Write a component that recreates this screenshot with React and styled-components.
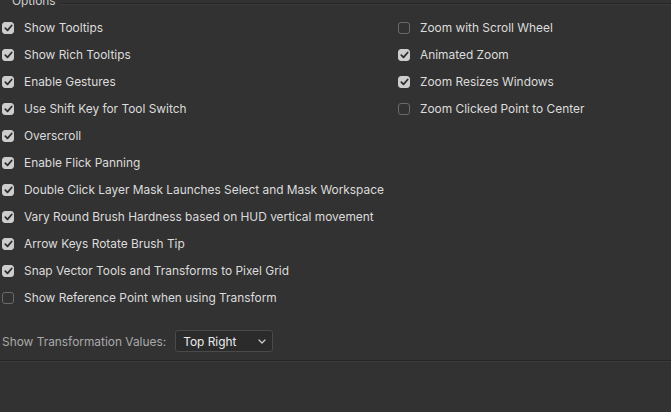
import React from "react";
import styled, { createGlobalStyle } from "styled-components";

const Global = createGlobalStyle`
  html, body { margin: 0; padding: 0; background: #323232; }
  body { font-family: Inter, "Noto Sans", "Liberation Sans", sans-serif; overflow: hidden; }
`;

const Page = styled.div`
  width: 671px;
  height: 412px;
  background: #323232;
  display: flex;
  flex-direction: column;
`;

const GroupHeader = styled.div`
  height: 14px;
  display: flex;
  align-items: flex-start;
  padding-left: 12px;
  gap: 4px;
`;

const Legend = styled.span`
  color: #d0d0d0;
  font-size: 11.9px;
  line-height: 14px;
  margin-top: -6px;
`;

const HeaderLine = styled.div`
  flex: 1;
  margin-top: 3px;
  height: 1px;
  background: #262626;
  box-shadow: 0 1px 0 #3a3a3a;
`;

const Columns = styled.div`
  display: grid;
  grid-template-columns: 396px 1fr;
  padding-left: 2px;
`;

const Column = styled.div`
  display: flex;
  flex-direction: column;
`;

const Row = styled.label`
  height: 27px;
  display: flex;
  align-items: center;
  gap: 10px;
  color: #dcdcdc;
  font-size: 11.9px;
  white-space: nowrap;
`;

const Box = styled.span`
  width: 12px;
  height: 12px;
  box-sizing: border-box;
  border-radius: 3px;
  flex: none;
  display: flex;
  align-items: center;
  justify-content: center;
  background: ${(p) => (p.$checked ? "#cdcdcd" : "transparent")};
  border: 1px solid ${(p) => (p.$checked ? "#cdcdcd" : "#6a6a6a")};
`;

const TransformRow = styled.div`
  display: flex;
  align-items: center;
  gap: 9px;
  padding-left: 2px;
  margin-top: 19px;
`;

const DimLabel = styled.span`
  color: #a9a9a9;
  font-size: 11.9px;
`;

const Select = styled.div`
  width: 98px;
  height: 22px;
  box-sizing: border-box;
  border: 1px solid #4a4a4a;
  border-radius: 3px;
  background: #2b2b2b;
  display: flex;
  align-items: center;
  justify-content: space-between;
  padding: 0 6px 0 7px;
  color: #ececec;
  font-size: 11.9px;
`;

const Divider = styled.div`
  margin-top: 8px;
  height: 1px;
  background: #262626;
  box-shadow: 0 1px 0 #3a3a3a;
`;

const Check = () => (
  <svg width="9" height="8" viewBox="0 0 9 8">
    <path d="M1.3 4.2 L3.5 6.3 L7.7 1.5" fill="none" stroke="#2e2e2e" strokeWidth="1.8" strokeLinecap="round" strokeLinejoin="round" />
  </svg>
);

const Option = ({ checked, children }) => (
  <Row>
    <Box $checked={checked}>{checked && <Check />}</Box>
    {children}
  </Row>
);

const left = [
  ["Show Tooltips", true],
  ["Show Rich Tooltips", true],
  ["Enable Gestures", true],
  ["Use Shift Key for Tool Switch", true],
  ["Overscroll", true],
  ["Enable Flick Panning", true],
  ["Double Click Layer Mask Launches Select and Mask Workspace", true],
  ["Vary Round Brush Hardness based on HUD vertical movement", true],
  ["Arrow Keys Rotate Brush Tip", true],
  ["Snap Vector Tools and Transforms to Pixel Grid", true],
  ["Show Reference Point when using Transform", false],
];

const right = [
  ["Zoom with Scroll Wheel", false],
  ["Animated Zoom", true],
  ["Zoom Resizes Windows", true],
  ["Zoom Clicked Point to Center", false],
];

export default function App() {
  return (
    <Page>
      <Global />
      <GroupHeader>
        <Legend>Options</Legend>
        <HeaderLine />
      </GroupHeader>
      <Columns>
        <Column>
          {left.map(([t, c]) => (
            <Option key={t} checked={c}>{t}</Option>
          ))}
        </Column>
        <Column>
          {right.map(([t, c]) => (
            <Option key={t} checked={c}>{t}</Option>
          ))}
        </Column>
      </Columns>
      <TransformRow>
        <DimLabel>Show Transformation Values:</DimLabel>
        <Select>
          <span>Top Right</span>
          <svg width="8" height="5" viewBox="0 0 8 5">
            <path d="M1 1 L4 4 L7 1" fill="none" stroke="#cfcfcf" strokeWidth="1.2" strokeLinecap="round" strokeLinejoin="round" />
          </svg>
        </Select>
      </TransformRow>
      <Divider />
    </Page>
  );
}
